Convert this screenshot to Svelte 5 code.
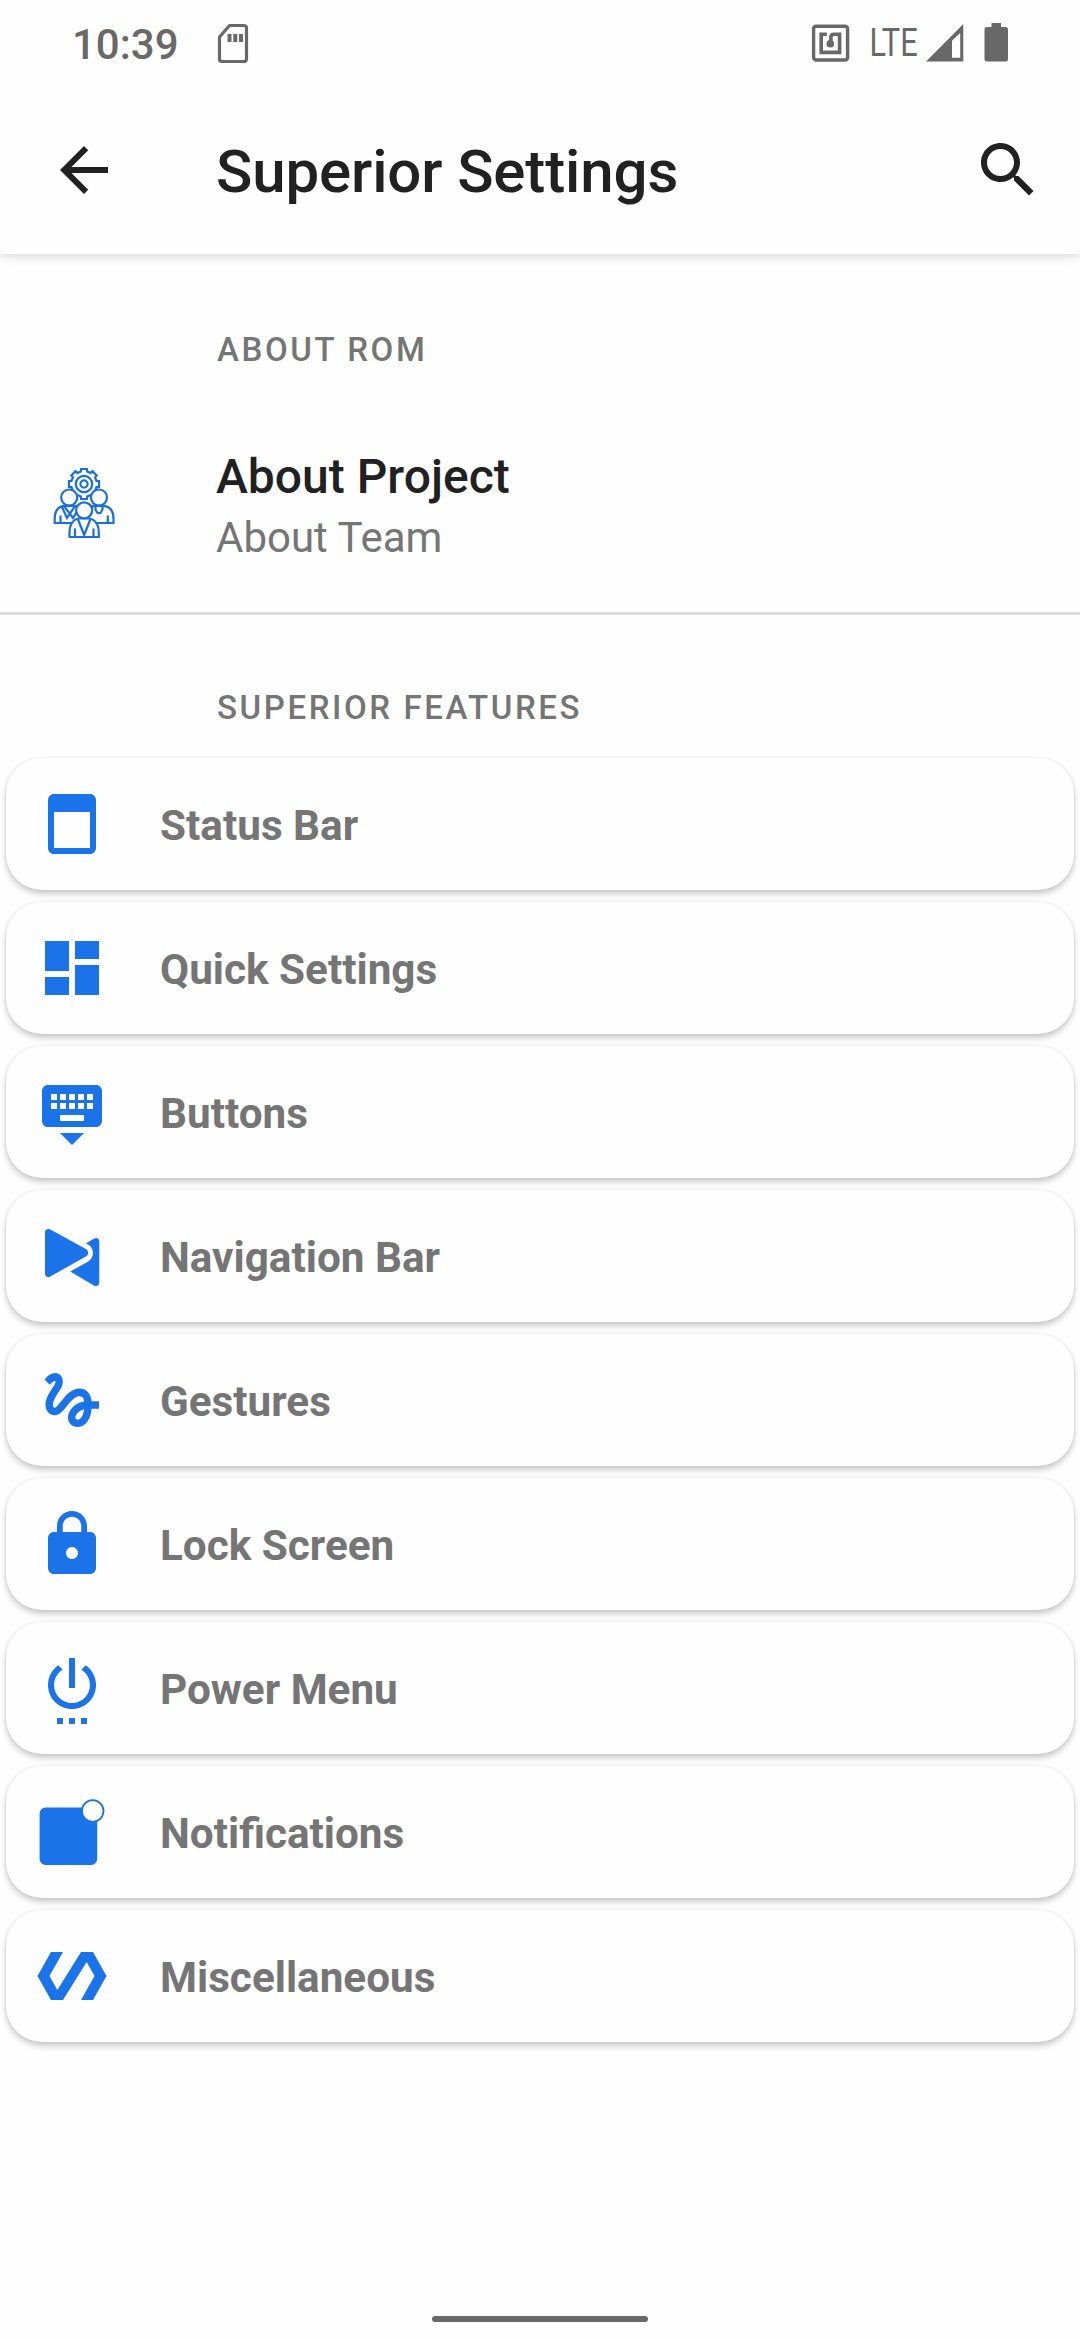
<script>
  const items = [
    {
      label: 'Status Bar',
      path: 'M18 2H6c-1.1 0-2 .9-2 2v16c0 1.1.9 2 2 2h12c1.1 0 2-.9 2-2V4c0-1.1-.9-2-2-2zM18 20H6V8h12z'
    },
    {
      label: 'Quick Settings',
      path: 'M3 13h8V3H3zM3 21h8v-6H3zM13 21h8V11h-8zM13 3v6h8V3z'
    },
    {
      label: 'Buttons',
      path: 'M20 3H4c-1.1 0-2 .9-2 2v10c0 1.1.9 2 2 2h16c1.1 0 2-.9 2-2V5c0-1.1-.9-2-2-2zM11 6h2v2h-2zM11 9h2v2h-2zM8 6h2v2H8zM8 9h2v2H8zM7 11H5V9h2zM7 8H5V6h2zM16 15H8v-2h8zM16 11h-2V9h2zM16 8h-2V6h2zM19 11h-2V9h2zM19 8h-2V6h2zM12 23l4-4H8z'
    },
    {
      label: 'Navigation Bar',
      path: 'M3 4.2C3 3.2 3.9 2.7 4.8 3.2L16.6 9.7C17.7 10.4 17.7 11.5 16.6 12.2L4.8 18.8C3.9 19.3 3 18.8 3 17.9zM16.6 7.8L19.4 6.2C20.2 5.7 21.1 6.2 21.1 7.1V20.8C21.1 21.8 20.2 22.3 19.3 21.8L11.4 17.2L17.4 13.8C19.5 12.6 19.5 9.4 17.4 8.2z'
    },
    {
      label: 'Gestures',
      path: 'M4.59 6.89c.7-.71 1.4-1.35 1.71-1.22.5.2 0 1.03-.3 1.52-.25.42-2.86 3.89-2.86 6.31 0 1.28.48 2.34 1.34 2.98.75.56 1.74.73 2.64.46 1.07-.31 1.95-1.4 3.06-2.77 1.21-1.49 2.83-3.44 4.08-3.44 1.63 0 1.65 1.01 1.76 1.79-3.78.64-5.38 3.67-5.38 5.37 0 1.7 1.44 3.09 3.21 3.09 1.63 0 4.29-1.33 4.69-6.1H21v-2.5h-2.47c-.15-1.65-1.09-4.2-4.03-4.2-2.25 0-4.18 1.91-4.94 2.84-.58.73-2.06 2.48-2.29 2.72-.25.3-.68.84-1.11.84-.45 0-.72-.83-.36-1.92.35-1.09 1.4-2.86 1.85-3.52.78-1.14 1.3-1.92 1.3-3.28C8.95 3.69 7.31 3 6.44 3 5.12 3 3.97 4 3.72 4.25c-.36.36-.66.66-.88.93l1.75 1.71zm9.29 11.66c-.31 0-.74-.26-.74-.72 0-.6.73-2.2 2.87-2.76-.3 2.69-1.43 3.48-2.13 3.48z'
    },
    {
      label: 'Lock Screen',
      path: 'M18 8h-1V6c0-2.76-2.24-5-5-5S7 3.24 7 6v2H6c-1.1 0-2 .9-2 2v10c0 1.1.9 2 2 2h12c1.1 0 2-.9 2-2V10c0-1.1-.9-2-2-2zM12 17c-1.1 0-2-.9-2-2s.9-2 2-2 2 .9 2 2-.9 2-2 2zM15.1 8H8.9V6c0-1.71 1.39-3.1 3.1-3.1 1.71 0 3.1 1.39 3.1 3.1z'
    },
    {
      label: 'Power Menu',
      path: 'M7 24h2v-2H7zM11 24h2v-2h-2zM13 2h-2v10h2zM16.56 4.44l-1.45 1.45C16.84 6.94 18 8.83 18 11c0 3.31-2.69 6-6 6s-6-2.69-6-6c0-2.17 1.16-4.06 2.88-5.12L7.44 4.44C5.36 5.88 4 8.28 4 11c0 4.42 3.58 8 8 8s8-3.58 8-8c0-2.72-1.36-5.12-3.44-6.56zM15 24h2v-2h-2z'
    },
    { label: 'Notifications', badge: true, path: 'M3.2 3.8H18.4a2 2 0 0 1 2 2V21a2 2 0 0 1-2 2H3.2a2 2 0 0 1-2-2V5.8a2 2 0 0 1 2-2z' },
    { label: 'Miscellaneous', path: 'M19 4h-4L7.11 16.63 4.5 12 9 4H5L.5 12 5 20h4l7.89-12.63L19.5 12 15 20h4l4.5-8z' }
  ];

  // Outline of the eight-toothed gear above the team figures
  const toothProfile = [
    [-14, 12.9],
    [-11, 15.3],
    [11, 15.3],
    [14, 12.9]
  ];
  const gear = Array.from({ length: 8 }, (_, tooth) =>
    toothProfile.map(([offset, radius]) => {
      const angle = ((tooth * 45 + offset - 90) * Math.PI) / 180;
      return `${(42 + radius * Math.cos(angle)).toFixed(2)},${(24 + radius * Math.sin(angle)).toFixed(2)}`;
    })
  )
    .flat()
    .join(' ');
</script>

<div class="screen">
  <div class="status">
    <span class="time">10:39</span>
    <svg class="sd" viewBox="0 0 30 39" width="30" height="39">
      <path d="M11.5 1.5H26a2.5 2.5 0 0 1 2.5 2.5V35a2.5 2.5 0 0 1-2.5 2.5H4A2.5 2.5 0 0 1 1.5 35V13z" fill="none" stroke="currentColor" stroke-width="3.2" />
      <path d="M9.5 10h4v8h-4zM15.3 10h4v8h-4zM21 10h4v8h-4z" fill="currentColor" />
    </svg>
    <svg class="right" viewBox="0 0 210 44" width="210" height="44">
      <g fill="none" stroke="currentColor">
        <rect x="3.6" y="6.2" width="34" height="33.8" rx="2.5" stroke-width="3.4" />
        <path d="M16.8 14.2H11.2V32.4H29.6V14.2H24Q20.9 14.2 20.9 17.2V23" stroke-width="3.6" />
      </g>
      <g fill="currentColor">
        <circle cx="20.3" cy="23.7" r="3.8" />
        <text x="0" y="0" transform="translate(59.4 35.7) scale(.81 1)" class="lte">LTE</text>
        <path fill-rule="evenodd" d="M116 41.5L153.3 4V41.5zM142 37.8h8.2V13L142 20.8z" />
        <path d="M181.5 3h9.5v4h4.5a2.5 2.5 0 0 1 2.5 2.5v29.5a2.5 2.5 0 0 1-2.5 2.5h-18.5a2.5 2.5 0 0 1-2.5-2.5v-29.5a2.5 2.5 0 0 1 2.5-2.5h4.5z" />
      </g>
    </svg>
  </div>

  <header>
    <svg viewBox="0 0 24 24" width="72" height="72"><path d="M20 11H7.83l5.59-5.59L12 4l-8 8 8 8 1.41-1.41L7.83 13H20z" /></svg>
    <h1>Superior Settings</h1>
    <svg viewBox="0 0 24 24" width="72" height="72"><path d="M15.5 14h-.79l-.28-.27C15.41 12.59 16 11.11 16 9.5 16 5.91 13.09 3 9.5 3S3 5.91 3 9.5 5.91 16 9.5 16c1.61 0 3.09-.59 4.23-1.57l.27.28v.79l5 4.99L20.49 19zM9.5 14C7.01 14 5 11.99 5 9.5S7.01 5 9.5 5 14 7.01 14 9.5 11.99 14 9.5 14z" /></svg>
  </header>

  <h2>ABOUT ROM</h2>
  <div class="about">
    <svg viewBox="0 0 84 84" width="84" height="84" fill="none" stroke="#1a6fdc" stroke-width="2.2">
      <polygon points={gear} />
      <circle cx="42" cy="24" r="8.2" />
      <circle cx="42" cy="24" r="3.6" />
      <circle class="solid" cx="27.2" cy="37.5" r="8" />
      <circle class="solid" cx="57" cy="37.5" r="8" />
      <path class="solid" d="M12.7 63V59C12.7 50 17 45.8 24 45.8H31C35 45.8 38 48 40 51V63z" />
      <path class="solid" d="M71.5 63V59C71.5 50 67 45.8 60 45.8H53C49 45.8 46 48 44 51V63z" />
      <path d="M18.5 63V55.5M65.8 63V55.5M20 47L25 58L33 46M22 46L31 58L36 50M53.5 46V49.5L55.5 53H58.5L60.5 49.5V46" />
      <path class="solid" d="M27.5 77V72.5C27.5 63.5 32 58.5 38 58.5H46C52 58.5 56.8 63.5 56.8 72.5V77z" />
      <circle class="solid" cx="42.2" cy="50.3" r="8" />
      <path d="M33 77V68.5M51.5 77V68.5M36 59.5L42.2 75L48.3 59.5" />
    </svg>
    <div class="about-text">
      <span class="primary">About Project</span>
      <span class="secondary">About Team</span>
    </div>
  </div>

  <h2 class="features">SUPERIOR FEATURES</h2>
  <div class="list">
    {#each items as item}
      <div class="card">
        <svg viewBox="0 0 24 24" width="72" height="72">
          <path fill-rule="evenodd" d={item.path} />
          {#if item.badge}
            <circle cx="18.9" cy="5" r="3.6" class="badge" />
          {/if}
        </svg>
        <span>{item.label}</span>
      </div>
    {/each}
  </div>
  <div class="home"></div>
</div>

<style>
  :global(body) { background: #fefefe; }
  .screen {
    width: 1080px;
    height: 2340px;
    box-sizing: border-box;
    display: flex;
    flex-direction: column;
    overflow: hidden;
    background: #fefefe;
    font-family: Roboto, sans-serif;
  }
  svg { flex: none; display: block; overflow: visible; }
  .status {
    height: 84px;
    box-sizing: border-box;
    flex: none;
    display: flex;
    align-items: flex-start;
    padding: 20px 60px 0 72px;
    color: #686868;
  }
  .time {
    width: 146px;
    font-size: 42px;
    font-weight: 500;
    line-height: 49px;
  }
  .sd { margin-top: 4px; }
  .right { margin-left: auto; }
  .lte { font: 400 38px Roboto, sans-serif; }
  header {
    height: 170px;
    flex: none;
    display: flex;
    align-items: center;
    box-sizing: border-box;
    padding: 2px 36px 0 48px;
    fill: #212121;
    box-shadow: 0 2px 10px rgba(0, 0, 0, 0.16);
    clip-path: inset(0 0 -24px 0);
  }
  h1 {
    flex: 1;
    margin: 4px 0 0 96px;
    font-size: 60px;
    font-weight: 500;
    line-height: 70px;
    letter-spacing: -0.12px;
    color: #212121;
  }
  h2 {
    flex: none;
    margin: 0;
    padding: 76px 0 0 217px;
    font-size: 33px;
    font-weight: 500;
    line-height: 40px;
    letter-spacing: 2.6px;
    color: #757575;
  }
  .about {
    height: 245px;
    flex: none;
    display: flex;
    align-items: flex-start;
    box-sizing: border-box;
    padding: 90px 0 0 42px;
    border-bottom: 3px solid #dcdcdc;
  }
  .solid { fill: #fefefe; }
  .about-text {
    display: flex;
    flex-direction: column;
    margin: -13px 0 0 90px;
  }
  .primary { font-size: 48px; font-weight: 500; line-height: 60px; color: #212121; }
  .secondary { font-size: 42px; line-height: 62px; color: #757575; }
  .features { padding-top: 73px; }
  .list {
    display: flex;
    flex-direction: column;
    gap: 12px;
    padding: 30px 6px 0;
  }
  .card {
    height: 132px;
    box-sizing: border-box;
    display: flex;
    align-items: center;
    gap: 52px;
    padding-left: 30px;
    border-radius: 36px;
    background: #fefefe;
    fill: #1a73e8;
    box-shadow: 0 4px 6px rgba(0, 0, 0, 0.2), 0 0 4px rgba(0, 0, 0, 0.07);
  }
  .card span {
    padding-top: 3px;
    font-size: 42.25px;
    font-weight: 700;
    line-height: 50px;
    color: #757575;
  }
  .badge { fill: #fefefe; stroke: #1a73e8; stroke-width: 0.6; }
  .home {
    width: 216px;
    height: 6px;
    flex: none;
    margin: auto auto 18px;
    border-radius: 3px;
    background: #686868;
  }
</style>
